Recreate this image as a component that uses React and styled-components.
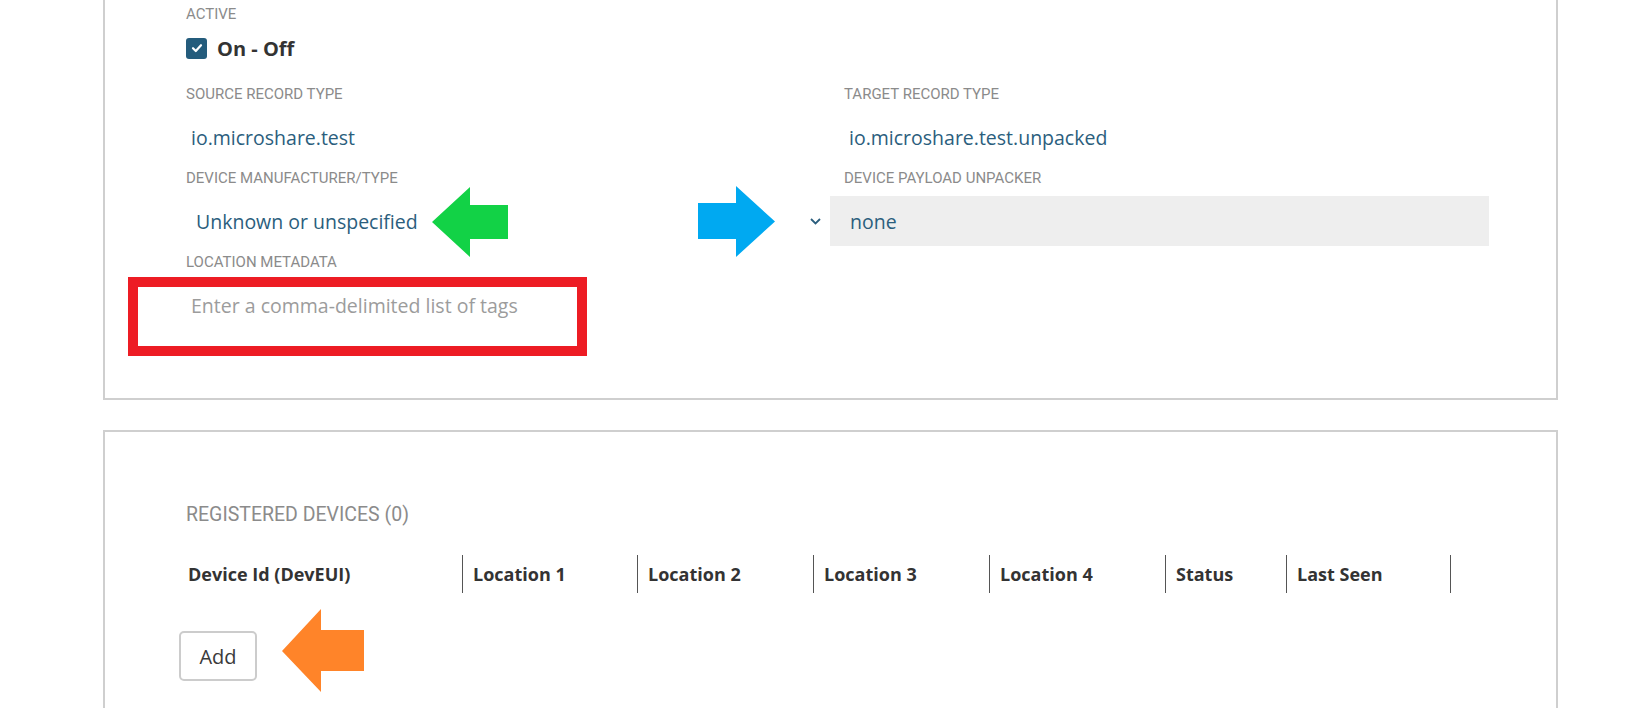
import React from 'react';
import styled, { createGlobalStyle } from 'styled-components';

const GlobalStyle = createGlobalStyle`
  html, body { margin: 0; padding: 0; background: #ffffff; }
  body { font-family: "Open Sans", Roboto, sans-serif; overflow: hidden; }
  *, *::before, *::after { box-sizing: border-box; }
`;

const Page = styled.div`
  position: relative;
  display: flex;
  flex-direction: column;
  gap: 30px;
  width: 1651px;
  height: 708px;
  padding-left: 103px;
  overflow: hidden;
`;

const Card = styled.section`
  width: 1455px;
  flex-shrink: 0;
  border: 2px solid #cfcfcf;
  background: #ffffff;
  margin-top: ${(p) => p.$offset || '0'};
  padding: ${(p) => p.$pad};
  min-height: ${(p) => p.$minH || 'auto'};
`;

const Label = styled.div`
  font-family: Roboto, sans-serif;
  font-size: 15px;
  line-height: 20px;
  color: #8b8b8b;
  text-transform: uppercase;
  white-space: nowrap;
`;

const CheckRow = styled.label`
  display: flex;
  align-items: center;
  gap: 10px;
  height: 24px;
  margin-top: 12px;
  font-family: "Open Sans", sans-serif;
  font-weight: 700;
  font-size: 20px;
  color: #333333;
`;

const CheckBox = styled.span`
  width: 21px;
  height: 21px;
  border-radius: 3px;
  background: #245c7c;
  display: inline-flex;
  align-items: center;
  justify-content: center;
`;

const FieldGrid = styled.div`
  display: grid;
  grid-template-columns: 658px 659px;
  row-gap: 6px;
  margin-top: 24px;
`;

const Field = styled.div`
  display: flex;
  flex-direction: column;
  gap: 8px;
`;

const Value = styled.div`
  height: 50px;
  display: flex;
  align-items: center;
  padding-left: ${(p) => p.$indent || '5px'};
  font-family: "Open Sans", sans-serif;
  font-size: 19.5px;
  color: #2b5e7d;
  white-space: nowrap;
`;

const SelectRow = styled.div`
  display: flex;
  align-items: center;
  margin-left: -36px;
  height: 50px;
`;

const Chevron = styled.span`
  width: 14px;
  margin-right: 8px;
  display: inline-flex;
  justify-content: center;
`;

const SelectBox = styled.div`
  width: 659px;
  height: 50px;
  background: #eeeeee;
  display: flex;
  align-items: center;
  padding-left: 20px;
  font-family: "Open Sans", sans-serif;
  font-size: 19.5px;
  color: #2b5e7d;
`;

const TagInput = styled.input`
  width: 400px;
  height: 50px;
  border: none;
  outline: none;
  background: transparent;
  padding: 0 0 0 5px;
  font-family: "Open Sans", sans-serif;
  font-size: 19.5px;
  color: #333;
  &::placeholder { color: #9c9c9c; }
`;

const SectionTitle = styled.h2`
  margin: 0;
  font-family: Roboto, sans-serif;
  font-weight: 400;
  font-size: 19.5px;
  line-height: 24px;
  color: #8b8b8b;
  text-transform: uppercase;
`;

const TableHead = styled.div`
  display: grid;
  grid-template-columns: 276px 175px 176px 176px 176px 121px 165px;
  height: 38px;
  margin-top: 28px;
`;

const HeadCell = styled.div`
  display: flex;
  align-items: center;
  padding-left: ${(p) => (p.$first ? '2px' : '10px')};
  border-left: ${(p) => (p.$first ? 'none' : '1px solid #555555')};
  border-right: ${(p) => (p.$last ? '1px solid #555555' : 'none')};
  font-family: "Open Sans", sans-serif;
  font-weight: 700;
  font-size: 18px;
  color: #333333;
  white-space: nowrap;
`;

const AddButton = styled.button`
  margin-top: 38px;
  margin-left: -7px;
  width: 78px;
  height: 50px;
  border: 2px solid #cccccc;
  border-radius: 5px;
  background: #ffffff;
  font-family: "Open Sans", sans-serif;
  font-size: 20px;
  color: #3a3a3a;
  cursor: pointer;
`;

const Marker = styled.svg`
  position: absolute;
  left: ${(p) => p.$x}px;
  top: ${(p) => p.$y}px;
`;

const Highlight = styled.div`
  position: absolute;
  left: 128px;
  top: 277px;
  width: 459px;
  height: 79px;
  border: 10px solid #ed1c24;
  pointer-events: none;
`;

const columns = ['Device Id (DevEUI)', 'Location 1', 'Location 2', 'Location 3', 'Location 4', 'Status', 'Last Seen'];

export default function App() {
  return (
    <>
      <GlobalStyle />
      <Page>
        <Card $offset="-20px" $pad="22px 0 68px 81px">
          <Label>Active</Label>
          <CheckRow>
            <CheckBox>
              <svg width="12" height="10" viewBox="0 0 12 10">
                <path d="M2 5.2 L4.8 8 L10 2.2" fill="none" stroke="#fff" strokeWidth="2.2" strokeLinecap="round" strokeLinejoin="round" />
              </svg>
            </CheckBox>
            On - Off
          </CheckRow>
          <FieldGrid>
            <Field>
              <Label>Source Record Type</Label>
              <Value>io.microshare.test</Value>
            </Field>
            <Field>
              <Label>Target Record Type</Label>
              <Value>io.microshare.test.unpacked</Value>
            </Field>
            <Field>
              <Label>Device Manufacturer/Type</Label>
              <Value $indent="10px">Unknown or unspecified</Value>
            </Field>
            <Field>
              <Label>Device Payload Unpacker</Label>
              <SelectRow>
                <Chevron>
                  <svg width="11" height="7" viewBox="0 0 11 7">
                    <path d="M1 1 L5.5 5.5 L10 1" fill="none" stroke="#2b5e7d" strokeWidth="1.8" />
                  </svg>
                </Chevron>
                <SelectBox>none</SelectBox>
              </SelectRow>
            </Field>
            <Field>
              <Label>Location Metadata</Label>
              <TagInput placeholder="Enter a comma-delimited list of tags" />
            </Field>
          </FieldGrid>
        </Card>
        <Card $pad="71px 0 40px 81px" $minH="400px">
          <SectionTitle>Registered Devices (0)</SectionTitle>
          <TableHead>
            {columns.map((c, i) => (
              <HeadCell key={c} $first={i === 0} $last={i === columns.length - 1}>{c}</HeadCell>
            ))}
          </TableHead>
          <AddButton>Add</AddButton>
        </Card>

        <Highlight />
        <Marker $x={432} $y={187} width="76" height="70" viewBox="0 0 76 70">
          <polygon points="0,35 38,0 38,18 76,18 76,52 38,52 38,70" fill="#12d246" />
        </Marker>
        <Marker $x={698} $y={186} width="77" height="71" viewBox="0 0 77 71">
          <polygon points="0,17 38,17 38,0 77,35.5 38,71 38,53 0,53" fill="#00a9f1" />
        </Marker>
        <Marker $x={282} $y={609} width="82" height="83" viewBox="0 0 82 83">
          <polygon points="0,42 39,0 39,21 82,21 82,62 39,62 39,83" fill="#ff8429" />
        </Marker>
      </Page>
    </>
  );
}
